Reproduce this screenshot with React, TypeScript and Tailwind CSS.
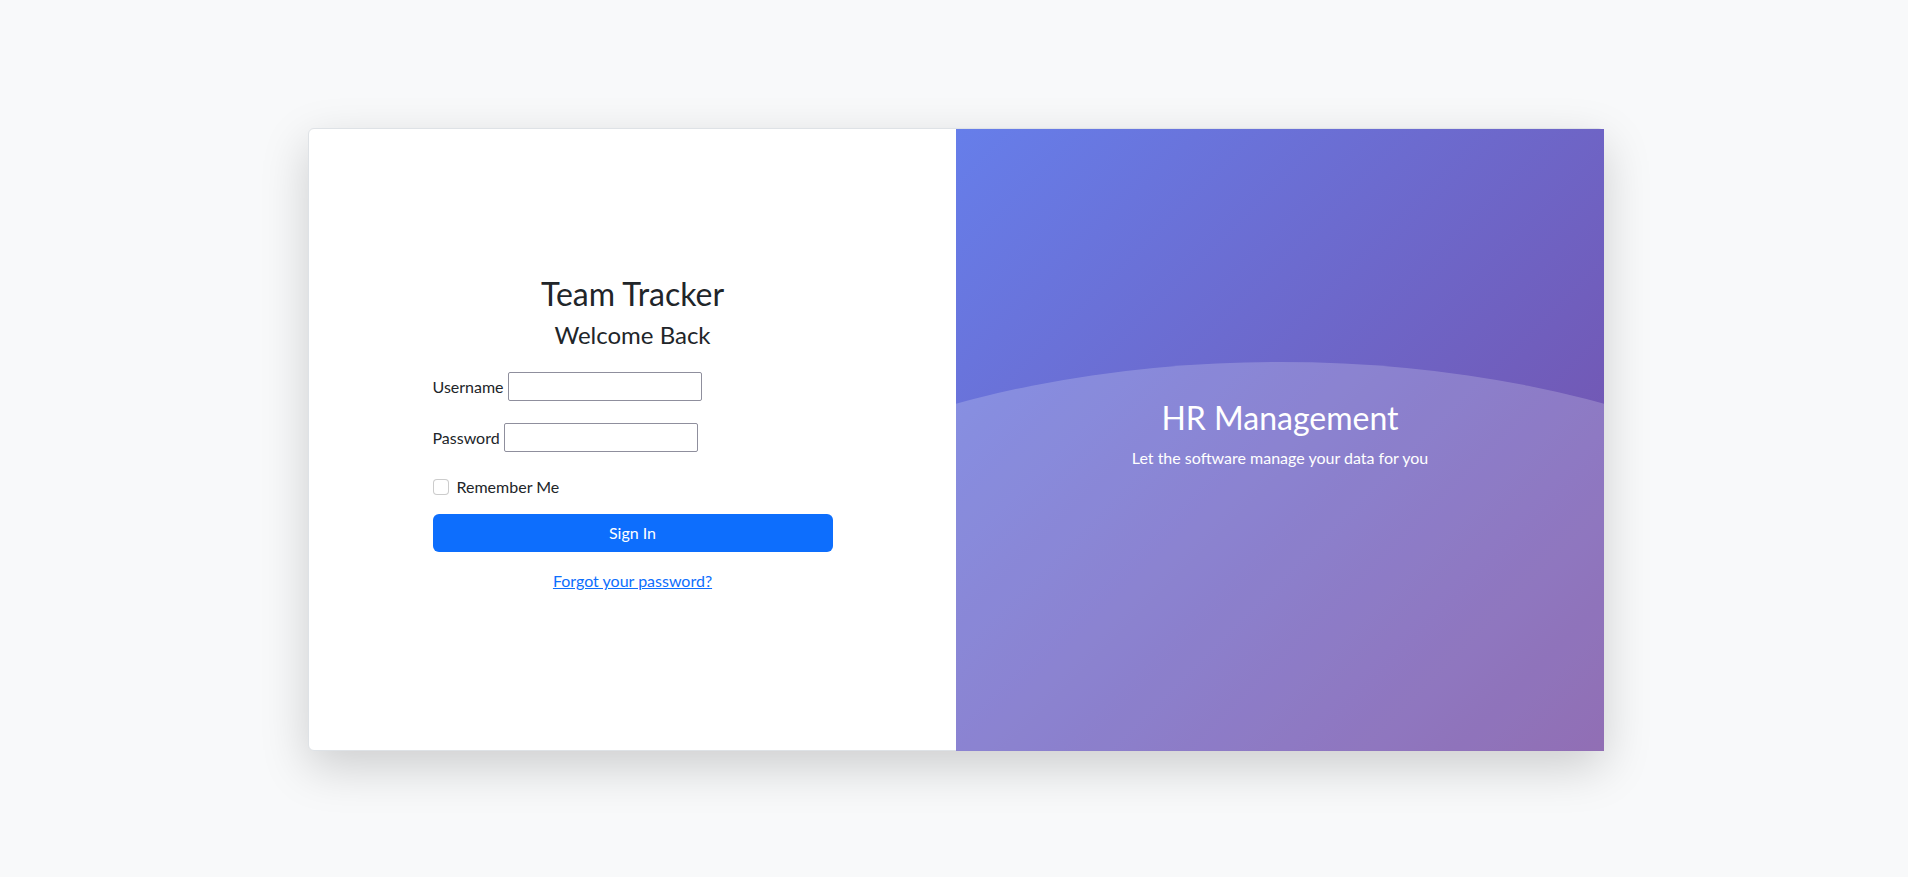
import React from 'react';

export default function App() {
  return (
    <div className="min-h-screen bg-[#f8f9fa] pt-[128px] font-['Lato',sans-serif] text-[#212529]">
      <div className="ml-[308px] w-[1296px] flex items-start rounded-md border border-[#dee2e6] bg-white shadow-[0_16px_48px_rgba(0,0,0,0.175)]">
        {/* left: login form */}
        <div className="w-[647px] h-[621px] pt-[5px] flex flex-col items-center justify-center">
          <div className="w-[400px] flex flex-col">
            <h2 className="text-center text-[32px] leading-[1.2] mb-2">Team Tracker</h2>
            <h4 className="text-center text-[24px] leading-[1.2] mb-[22px]">Welcome Back</h4>

            <div className="flex items-center gap-1 h-[29px]">
              <label htmlFor="username" className="text-[16px]">Username</label>
              <input id="username" type="text" className="w-[194px] h-[29px] border border-[#8f8f9d] rounded-[2px] px-1" />
            </div>
            <div className="flex items-center gap-1 h-[29px] mt-[22px]">
              <label htmlFor="password" className="text-[16px]">Password</label>
              <input id="password" type="password" className="w-[194px] h-[29px] border border-[#8f8f9d] rounded-[2px] px-1" />
            </div>

            <div className="flex items-center h-[24px] mt-[23px]">
              <input id="remember" type="checkbox" className="appearance-none w-4 h-4 border border-black/20 rounded-[4px] bg-white" />
              <label htmlFor="remember" className="ml-2 text-[16px]">Remember Me</label>
            </div>

            <button className="mt-[15px] h-[38px] w-full rounded-md bg-[#0d6efd] text-white text-[16px]">Sign In</button>

            <p className="mt-[17px] mb-4 text-center leading-[24px]">
              <a href="#" className="text-[#0d6efd] underline">Forgot your password?</a>
            </p>
          </div>
        </div>

        {/* right: banner */}
        <div className="relative w-[648px] h-[622px] -mr-px -mb-px pt-[5px] overflow-hidden bg-[linear-gradient(135deg,#667eea_0%,#764ba2_100%)] flex flex-col items-center justify-center text-white">
          <div className="absolute left-[-50%] top-[37.5%] w-[200%] h-full rounded-[50%] bg-white/20" />
          <div className="relative text-center">
            <h2 className="text-[32px] leading-[1.2] mb-2">HR Management</h2>
            <p className="text-[16px] leading-[24px] mb-4">Let the software manage your data for you</p>
          </div>
        </div>
      </div>
    </div>
  );
}
